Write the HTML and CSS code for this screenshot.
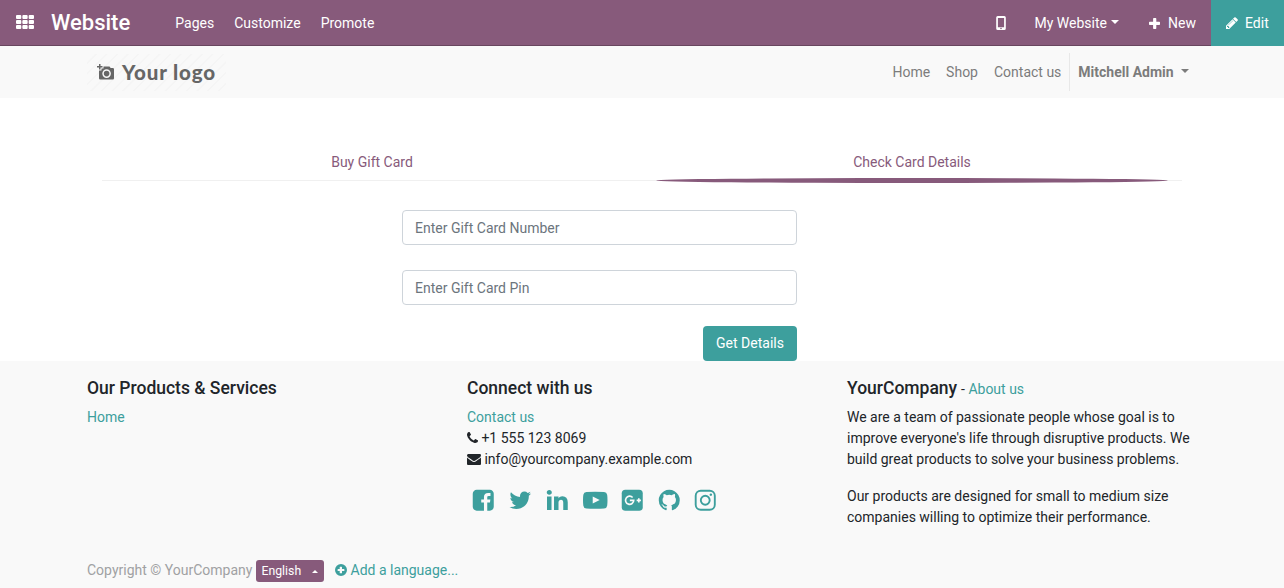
FILE: index.html
```html
<!DOCTYPE html>
<html lang="en">
<head>
<meta charset="utf-8">
<title>Gift Card | My Website</title>
<link rel="stylesheet" href="styles.css">
</head>
<body>
<nav class="topbar">
  <svg class="apps" viewBox="0 0 18 14"><path d="M1 0h3.300a1 1 0 0 1 1 1v2a1 1 0 0 1-1 1h-3.300a1 1 0 0 1-1-1v-2a1 1 0 0 1 1-1zM7.350 0h3.300a1 1 0 0 1 1 1v2a1 1 0 0 1-1 1h-3.300a1 1 0 0 1-1-1v-2a1 1 0 0 1 1-1zM13.700 0h3.300a1 1 0 0 1 1 1v2a1 1 0 0 1-1 1h-3.300a1 1 0 0 1-1-1v-2a1 1 0 0 1 1-1zM1 5h3.300a1 1 0 0 1 1 1v2a1 1 0 0 1-1 1h-3.300a1 1 0 0 1-1-1v-2a1 1 0 0 1 1-1zM7.350 5h3.300a1 1 0 0 1 1 1v2a1 1 0 0 1-1 1h-3.300a1 1 0 0 1-1-1v-2a1 1 0 0 1 1-1zM13.700 5h3.300a1 1 0 0 1 1 1v2a1 1 0 0 1-1 1h-3.300a1 1 0 0 1-1-1v-2a1 1 0 0 1 1-1zM1 10h3.300a1 1 0 0 1 1 1v2a1 1 0 0 1-1 1h-3.300a1 1 0 0 1-1-1v-2a1 1 0 0 1 1-1zM7.350 10h3.300a1 1 0 0 1 1 1v2a1 1 0 0 1-1 1h-3.300a1 1 0 0 1-1-1v-2a1 1 0 0 1 1-1zM13.700 10h3.300a1 1 0 0 1 1 1v2a1 1 0 0 1-1 1h-3.300a1 1 0 0 1-1-1v-2a1 1 0 0 1 1-1z"/></svg>
  <span class="brand">Website</span>
  <div class="menu"><a>Pages</a><a>Customize</a><a>Promote</a></div>
  <div class="systray">
    <svg class="mobile" viewBox="0 0 10 14"><path fill-rule="evenodd" d="M1.700 0h6.600a1.500 1.500 0 0 1 1.500 1.500v11a1.500 1.500 0 0 1-1.500 1.500h-6.600a1.500 1.500 0 0 1-1.500-1.500v-11a1.500 1.500 0 0 1 1.500-1.500zM1.900 2v9.200h6.200v-9.200zM5 11.700a.8.800 0 1 0 0 1.600.8.800 0 0 0 0-1.600z"/></svg>
    <a class="site">My Website<i class="caret"></i></a>
    <a class="new"><svg class="plus" viewBox="0 0 11 11"><path d="M4.800 0h1.800a.7.700 0 0 1 .7.700v3.100h3a.7.700 0 0 1 .7.700v1.800a.7.700 0 0 1-.7.700h-3v3.300a.7.700 0 0 1-.7.700h-1.800a.7.700 0 0 1-.7-.7v-3.300h-3.400a.7.700 0 0 1-.7-.7v-1.800a.7.700 0 0 1 .7-.7h3.400v-3.100a.7.700 0 0 1 .7-.7z"/></svg>New</a>
    <a class="edit"><svg class="fa" viewBox="0 0 1792 1792"><path d="M491 1536l91-91-235-235-91 91v107h128v128h107zm523-928q0-22-22-22-10 0-17 7l-542 542q-7 7-7 17 0 22 22 22 10 0 17-7l542-542q7-7 7-17zm-54-192l416 416-832 832h-416v-416zm683 96q0 53-37 90l-166 166-416-416 166-165q36-38 90-38 53 0 91 38l235 234q37 39 37 91z"/></svg>Edit</a>
  </div>
</nav>
<header class="header">
  <div class="container header-row">
    <div class="logo">
      <svg class="camera" viewBox="0 0 17 16"><path fill-rule="evenodd" d="M2 0h1.500v2h2v1.500h-2v2H2v-2H0V2h2zM6.500 2.500h6l1.200 1.600h2.100a1.200 1.200 0 0 1 1.200 1.200v9a1.200 1.200 0 0 1-1.200 1.200H3.200A1.200 1.200 0 0 1 2 14.300V6.500h2.500v-2h2zM9.600 5.300a4.300 4.300 0 1 0 0 8.600 4.300 4.300 0 0 0 0-8.600zm0 1.500a2.800 2.800 0 1 1 0 5.600 2.800 2.800 0 0 1 0-5.600z"/></svg>
      <span>Your logo</span>
    </div>
    <div class="links"><a>Home</a><a>Shop</a><a>Contact us</a><a class="user">Mitchell Admin<i class="caret"></i></a></div>
  </div>
</header>
<main class="main">
  <div class="tabs"><a class="tab">Buy Gift Card</a><a class="tab active">Check Card Details</a></div>
  <form class="form">
    <input class="field" placeholder="Enter Gift Card Number">
    <input class="field" placeholder="Enter Gift Card Pin">
    <button class="submit" type="button">Get Details</button>
  </form>
</main>
<footer class="footer">
  <div class="container columns">
    <section><h5>Our Products &amp; Services</h5><a class="link">Home</a></section>
    <section>
      <h5>Connect with us</h5>
      <div><a class="link">Contact us</a></div>
      <div class="contact"><svg class="fa phone" viewBox="192 0 1408 1792"><path d="M1600 1240q0 27-10 70.500t-21 68.500q-21 50-122 106-94 51-186 51-27 0-53-3.500t-57.500-12.500-47-14.500-55.500-20.500-49-18q-98-35-175-83-127-79-264-216t-216-264q-48-77-83-175-3-9-18-49t-20.500-55.500-14.500-47-12.500-57.500-3.500-53q0-92 51-186 56-101 106-122 25-11 68.500-21t70.500-10q14 0 21 3 18 6 53 76 11 19 30 54t35 63.500 31 53.500q3 4 17.500 25t21.500 35.500 7 28.500q0 20-28.500 50t-62 55-62 53-28.500 46q0 9 5 22.500t8.500 20.500 14 24 11.500 19q76 137 174 235t235 174q2 1 19 11.500t24 14 20.500 8.500 22.500 5q18 0 46-28.500t53-62 55-62 50-28.500q14 0 28.500 7t35.500 21.500 25 17.500q25 15 53.500 31t63.500 35 54 30q70 35 76 53 3 7 3 21z"/></svg>+1 555 123 8069</div>
      <div class="contact"><svg class="fa" viewBox="0 0 1792 1792"><path d="M1792 710v794q0 66-47 113t-113 47h-1472q-66 0-113-47t-47-113v-794q44 49 101 87 362 246 497 345 57 42 92.500 65.500t94.500 48 110 24.500h2q51 0 110-24.500t94.500-48 92.500-65.500q170-123 498-345 57-39 100-87zm0-294q0 79-49 151t-122 123q-376 261-468 325-10 7-42.500 31t-54 38.500-52 32.500-57.500 27-50 9h-2q-23 0-50-9t-57.500-27-52-32.500-54-38.500-42.500-31q-91-64-262-182.500t-205-142.500q-62-42-117-115.500t-55-136.500q0-78 41.500-130t118.500-52h1472q65 0 112.500 47t47.500 113z"/></svg>info@yourcompany.example.com</div>
      <div class="social">
        <svg viewBox="0 0 1792 1792"><path d="M1376 128q119 0 203.500 84.500t84.500 203.500v960q0 119-84.500 203.500t-203.500 84.500h-188v-595h199l30-232h-229v-148q0-56 23.500-84t91.500-28l122-1v-207q-63-9-178-9-136 0-217.500 80t-81.500 226v171h-200v232h200v595h-532q-119 0-203.500-84.500t-84.500-203.500v-960q0-119 84.500-203.500t203.500-84.500h960z"/></svg>
        <svg viewBox="0 0 1792 1792"><path d="M1684 408q-67 98-162 167 1 14 1 42 0 130-38 259.500t-115.500 248.500-184.500 210.500-258 146-323 54.500q-271 0-496-145 35 4 78 4 225 0 401-138-105-2-188-64.500t-114-159.500q33 5 61 5 43 0 85-11-112-23-185.500-111.500t-73.500-205.500v-4q68 38 146 41-66-44-105-115t-39-154q0-88 44-163 121 149 294.500 238.500t371.500 99.500q-8-38-8-74 0-134 94.500-228.500t228.500-94.500q140 0 236 102 109-21 205-78-37 115-142 178 93-10 186-50z"/></svg>
        <svg viewBox="0 0 1792 1792"><path d="M477 625v991h-330v-991h330zm21-306q1 73-50.500 122t-135.500 49h-2q-82 0-132-49t-50-122q0-74 51.500-122.500t134.500-48.500 133 48.500 51 122.500zm1166 729v568h-329v-530q0-105-40.500-164.500t-126.500-59.500q-63 0-105.500 34.500t-63.500 85.500q-11 30-11 81v553h-329q2-399 2-647t-1-296l-1-48h329v144h-2q20-32 41-56t56.500-52 87-43.500 114.500-15.500q171 0 275 113.500t104 332.500z"/></svg>
        <svg class="shift" viewBox="0 0 1792 1792"><path fill-rule="evenodd" d="M896 266Q1300 266 1540 286Q1735 300 1767 500Q1792 650 1792 896Q1792 1142 1767 1292Q1735 1492 1540 1506Q1300 1526 896 1526Q492 1526 252 1506Q57 1492 25 1292Q0 1142 0 896Q0 650 25 500Q57 300 252 286Q492 266 896 266ZM711 620V1130L1221 886Z"/></svg>
        <svg class="shift" viewBox="0 0 1792 1792"><rect x="128" y="128" width="1536" height="1536" rx="260"/><g class="knock"><path d="M925 690A300 300 0 1 0 1005 900H720M1375 745V1055M1220 900H1530"/></g></svg>
        <svg class="shift" viewBox="0 0 1792 1792"><path d="M896 128q209 0 385.500 103t279.500 279.500 103 385.500q0 251-146.500 451.500t-378.500 277.500q-27 5-40-7t-13-30q0-3 .5-76.500t.5-134.500q0-97-52-142 57-6 102.500-18t94-39 81-66.500 53-105 20.500-150.500q0-119-79-206 37-91-8-204-28-9-81 11t-92 44l-38 24q-93-26-192-26t-192 26q-16-11-42.500-27t-83.500-38.500-85-13.500q-45 113-8 204-79 87-79 206 0 85 20.500 150t52.500 105 80.500 67 94 39 102.500 18q-39 36-49 103-21 10-45 15t-57 5-65.500-21.500-55.500-62.500q-19-32-48.500-52t-49.500-24l-20-3q-21 0-29 4.500t-5 11.500 9 14 13 12l7 5q22 10 43.500 38t31.500 51l10 23q13 38 44 61.500t67 30 69.500 7 55.500-3.500l23-4q0 38 .5 88.500t.5 54.500q0 18-13 30t-40 7q-232-77-378.500-277.500t-146.500-451.500q0-209 103-385.500t279.500-279.500 385.500-103z"/></svg>
        <svg viewBox="0 0 1792 1792"><path d="M1152 896q0-106-75-181t-181-75-181 75-75 181 75 181 181 75 181-75 75-181zm138 0q0 164-115 279t-279 115-279-115-115-279 115-279 279-115 279 115 115 279zm108-410q0 38-27 65t-65 27-65-27-27-65 27-65 65-27 65 27 27 65z"/><rect class="outline" x="197" y="197" width="1398" height="1398" rx="370"/></svg>
      </div>
    </section>
    <section class="about">
      <h5>YourCompany<small> - <a class="link">About us</a></small></h5>
      <p>We are a team of passionate people whose goal is to improve everyone's life through disruptive products. We build great products to solve your business problems.</p>
      <p>Our products are designed for small to medium size companies willing to optimize their performance.</p>
    </section>
  </div>
  <div class="container bottom">
    <span class="copyright">Copyright © YourCompany</span>
    <button class="lang" type="button">English<i class="caret up"></i></button>
    <a class="link add"><svg class="circle" viewBox="0 0 12 12"><path fill-rule="evenodd" d="M6 0a6 6 0 1 1 0 12A6 6 0 0 1 6 0zM5.200 2.700a.5.500 0 0 0-.5.500v1.700H3.100a.5.500 0 0 0-.5.500v1.100a.5.500 0 0 0 .5.500h1.600v1.800a.5.500 0 0 0 .5.500h1.300a.5.500 0 0 0 .5-.5V7h1.900a.5.500 0 0 0 .5-.5V5.400a.5.500 0 0 0-.5-.5H7V3.200a.5.500 0 0 0-.5-.5z"/></svg>Add a language...</a>
  </div>
</footer>
</body>
</html>
```

FILE: styles.css
```css
* { box-sizing: border-box; }
body { margin: 0; font: 14px/21px Roboto, "Noto Sans", sans-serif; color: #212529; background: #fff; height: 588px; overflow: hidden; }
svg { fill: currentColor; flex: none; }
.fa { width: 14px; height: 14px; }
.container { width: 1140px; margin: 0 auto; padding: 0 15px; }
.caret { display: inline-block; border: 4.2px solid transparent; border-top-color: currentColor; border-bottom: 0; }
.link { color: #3d9f9d; }

.topbar { display: flex; align-items: center; height: 46px; background: #875a7b; border-bottom: 1px solid #68465f; color: #fff; padding-left: 16px; }
.apps { width: 18px; height: 14px; margin-top: -1px; }
.brand { font-size: 22px; font-weight: 500; margin-left: 17px; line-height: 44px; width: 124px; }
.menu { display: flex; gap: 20px; padding: 1px 0 0 0.3px; }
.systray { margin-left: auto; display: flex; align-items: center; height: 46px; margin-bottom: -1px; }
.mobile { width: 10px; height: 14px; margin-right: 29px; }
.site { display: flex; align-items: center; }
.site .caret { margin: -2px 0 0 4px; }
.new { display: flex; align-items: center; margin-left: 30px; width: 62px; }
.plus { width: 11px; height: 11px; margin-right: 8px; }
.edit { display: flex; align-items: center; gap: 6px; background: #3d9f9d; height: 46px; width: 73px; padding-left: 14px; }

.header { background: #f9f9f9; height: 52px; }
.header-row { display: flex; justify-content: space-between; align-items: center; height: 52px; }
.logo { display: flex; align-items: center; width: 139px; height: 37px; padding-left: 10px; color: #666; background: repeating-linear-gradient(135deg, #f9f9f9 0 5.500px, #f5f5f5 6px 7px, #f9f9f9 7.500px); font: 900 20.5px/36px Lato, sans-serif; letter-spacing: 0.85px; white-space: nowrap; }
.logo span { padding-bottom: 1px; }
.camera { width: 17px; height: 16px; margin-right: 8px; }
.links { display: flex; align-items: center; color: #7c7c7c; gap: 16px; }
.user { display: flex; align-items: center; height: 38px; margin-left: -8px; padding: 0 8px; border-left: 1px solid #e8e8e8; font-weight: 700; }
.user .caret { margin: -2px 0 0 7.4px; }

.main { height: 263px; padding-top: 46px; }
.tabs { display: grid; grid-template-columns: 1fr 1fr; width: 1080px; margin: 0 auto; border-bottom: 1px solid #f0f0f0; height: 37px; color: #875a7b; }
.tab { text-align: center; padding-top: 8px; position: relative; }
.active::after { content: ""; position: absolute; left: 14px; right: 14px; bottom: -3px; height: 5px; border-radius: 50%; background: #875a7b; }
.form { width: 395px; margin: 29px 0 0 402px; display: flex; flex-direction: column; }
.field { height: 35px; border: 1px solid #ced4da; border-radius: 4px; padding: 6px 12px; margin-bottom: 25px; font: inherit; background: #fff; }
.field::placeholder { color: #6c757d; opacity: 1; }
.submit { align-self: flex-end; margin-top: -4px; width: 94px; height: 35px; border: 0; border-radius: 4px; background: #3d9f9d; color: #fff; font: inherit; padding: 0; }

.footer { background: #f9f9f9; height: 227px; padding-top: 17px; }
.columns { display: grid; grid-template-columns: repeat(3, 350px); gap: 30px; height: 182px; }
h5 { margin: 0 0 8px; font-size: 17.5px; line-height: 21px; font-weight: 500; }
h5 small { font-size: 14px; font-weight: 400; }
.about h5 { margin-bottom: 7px; }
.about small { margin-left: 0.4px; }
p { margin: 0 0 16px; }
.contact { display: flex; align-items: center; gap: 3.4px; }
.contact svg { margin-top: -1px; }
.phone { width: 11px; }
.social { display: flex; gap: 12.5px; margin: 18px 0 0 4px; color: #3d9f9d; }
.social svg { width: 24.5px; height: 24.5px; }
.social .shift { margin: 0 -1px 0 1px; }
.knock { stroke: #f9f9f9; stroke-width: 120; fill: none; }
.outline { fill: none; stroke: currentColor; stroke-width: 138; }
.bottom { display: flex; align-items: center; height: 22px; }
.copyright { color: #a0a1a3; width: 169px; white-space: nowrap; margin-top: -2px; }
.lang { display: flex; align-items: center; width: 68px; height: 22px; border: 0; border-radius: 3px; background: #875a7b; color: #fff; font: 12.25px/18px Roboto, sans-serif; padding: 0 6px 0 5.5px; justify-content: space-between; }
.up { border: 3.500px solid transparent; border-bottom-color: currentColor; border-top: 0; }
.add { display: flex; align-items: center; gap: 3.5px; margin: -2px 0 0 11px; }
.circle { width: 12px; height: 12px; }
```
